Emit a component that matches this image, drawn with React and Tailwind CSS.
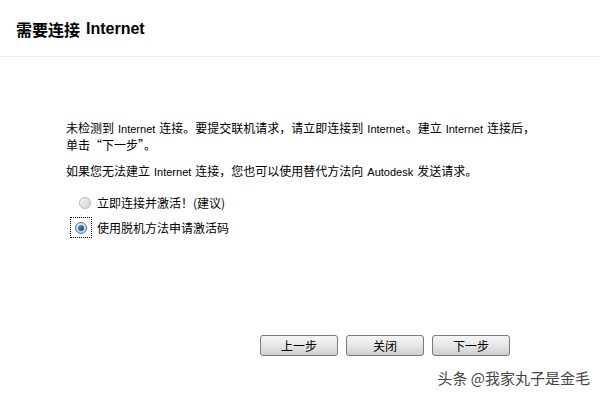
import React from 'react';

const cjk = { fontFamily: '"Noto Sans CJK SC", "Liberation Sans", sans-serif' };

function Latin({ children, tight }) {
  return (
    <span
      className={tight ? 'ml-[4px] mr-[1px] text-[11px]' : 'mx-[4px] text-[11px]'}
      style={{ fontFamily: '"Liberation Sans", sans-serif' }}
    >
      {children}
    </span>
  );
}

function Radio({ checked }) {
  if (checked) {
    return (
      <span className="w-[12px] h-[12px] rounded-full border border-[#4c6f8f] bg-gradient-to-b from-[#e6eef5] to-[#c3d4e3] flex items-center justify-center">
        <span className="w-[6px] h-[6px] rounded-full bg-gradient-to-br from-[#4aa0e0] to-[#0e3f6b]" />
      </span>
    );
  }
  return (
    <span className="w-[12px] h-[12px] rounded-full border border-[#b8b8b8] bg-gradient-to-br from-[#f4f4f4] to-[#d4d4d4]" />
  );
}

function Btn({ label }) {
  return (
    <button className="w-[78px] h-[21px] rounded-[3px] border border-[#7a7a7a] bg-gradient-to-b from-[#f6f6f6] via-[#e6e6e6] to-[#cfcfcf] text-[12px] text-black leading-none" style={cjk}>
      {label}
    </button>
  );
}

export default function App() {
  return (
    <div className="w-[600px] h-[400px] bg-white flex flex-col text-black overflow-hidden" style={cjk}>
      <div className="h-[57px] border-b border-[#ececec] flex items-center pl-[16px] pt-[1px]">
        <span className="text-[16px] font-bold">需要连接</span>
        <span className="text-[16px] font-bold ml-[6px]" style={{ fontFamily: '"Liberation Sans", sans-serif' }}>Internet</span>
      </div>

      <div className="pl-[66px] pt-[63px] text-[12px] leading-[16px]">
        <p>
          未检测到<Latin>Internet</Latin>连接。要提交联机请求，请立即连接到<Latin tight>Internet</Latin>。建立<Latin>Internet</Latin>连接后，
          <br />
          单击“下一步”。
        </p>
        <p className="mt-[10px]">
          如果您无法建立<Latin>Internet</Latin>连接，您也可以使用替代方法向<Latin>Autodesk</Latin>发送请求。
        </p>

        <div className="mt-[10px] flex flex-col">
          <div className="h-[25px] flex items-center">
            <span className="w-[22px] ml-[8px] flex justify-center">
              <Radio />
            </span>
            <span className="ml-[1px]">立即连接并激活！(建议)</span>
          </div>
          <div className="h-[25px] flex items-center">
            <span className="w-[22px] h-[21px] ml-[4px] mr-[4px] border border-dotted border-black flex items-center justify-center">
              <Radio checked />
            </span>
            <span className="ml-[1px]">使用脱机方法申请激活码</span>
          </div>
        </div>
      </div>

      <div className="mt-auto flex justify-end gap-[8px] pr-[90px]">
        <Btn label="上一步" />
        <Btn label="关闭" />
        <Btn label="下一步" />
      </div>

      <div className="h-[44px] flex items-center justify-end pr-[10px]">
        <span className="text-[15px] text-[#444] [text-shadow:1px_1px_1px_rgba(255,255,255,0.9),0_0_2px_#fff]">
          头条 @我家丸子是金毛
        </span>
      </div>
    </div>
  );
}
